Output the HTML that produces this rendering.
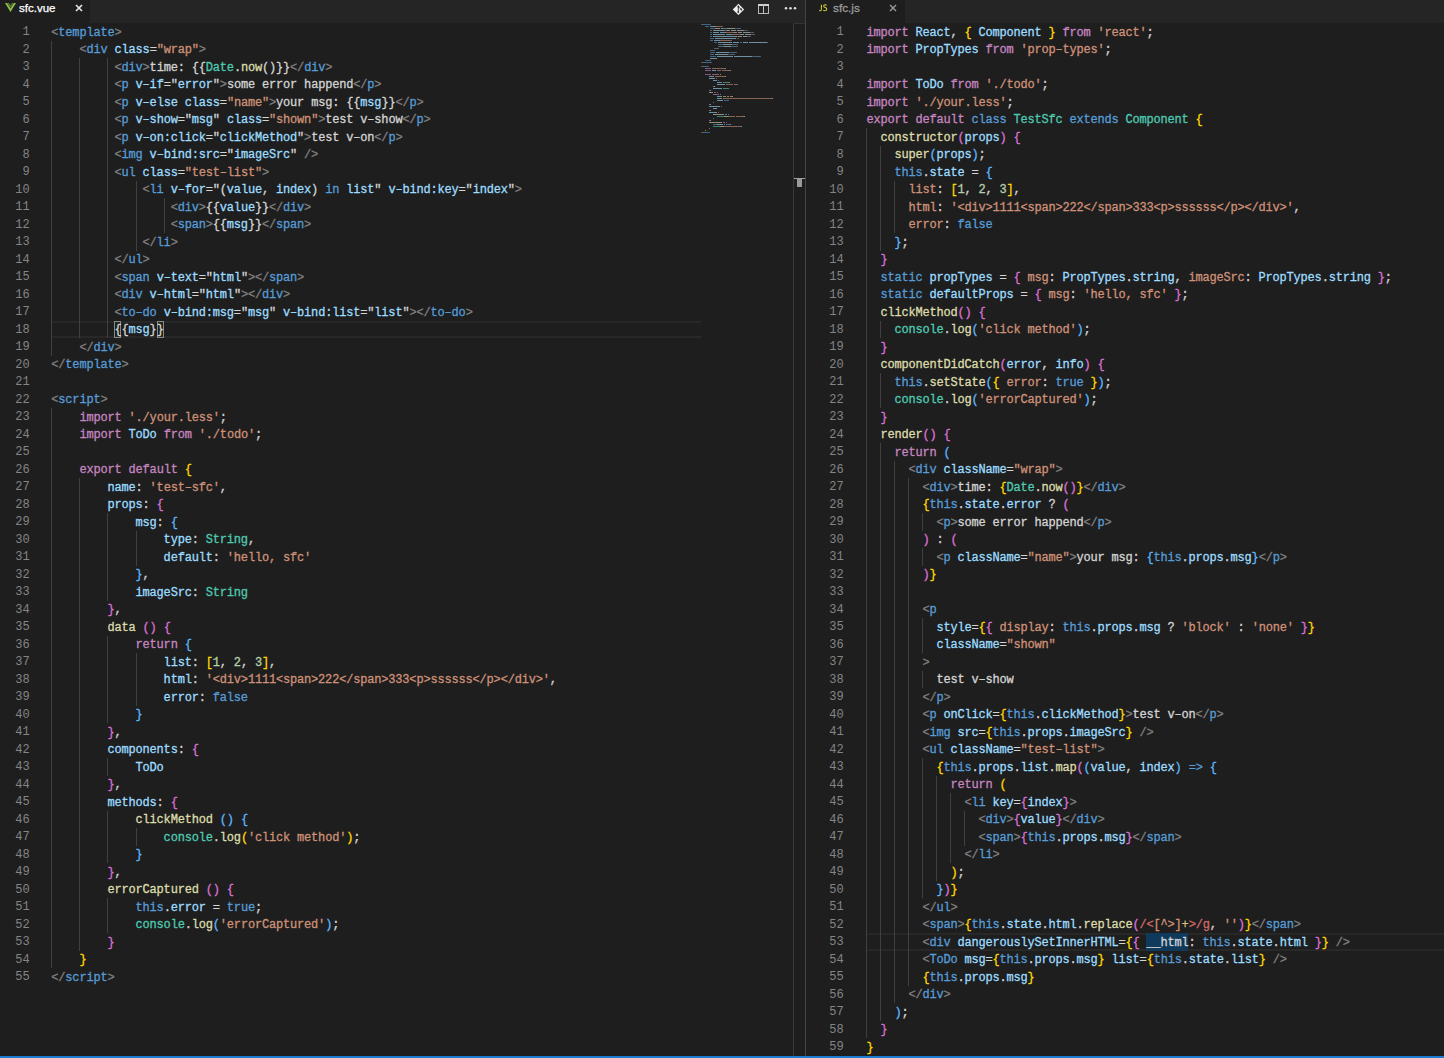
<!DOCTYPE html>
<html><head><meta charset="utf-8"><style>
*{margin:0;padding:0;box-sizing:border-box}
html,body{width:1444px;height:1058px;overflow:hidden;background:#1e1e1e}
body{position:relative;font-family:"Liberation Mono",monospace}
.pane{position:absolute;top:0;bottom:0;overflow:hidden}
#LP{left:0;width:805px}
#RP{left:806px;width:638px}
.tabs{position:absolute;left:0;right:0;top:0;height:23px;background:#252526}
.tab{position:absolute;top:0;height:23px;background:#1e1e1e;font-family:"Liberation Sans",sans-serif;font-size:11.5px;line-height:23px}
.cd,.ln{position:absolute;white-space:pre;padding-top:1.6px;-webkit-text-stroke:0.3px currentColor;font-size:12.0px;line-height:17.5px;height:17.5px;letter-spacing:-0.180px;color:#d4d4d4}
.ln{color:#858585;text-align:right;letter-spacing:0;-webkit-text-stroke:0;padding-top:1.3px}
i{font-style:normal}
.w{color:#d4d4d4}.t{color:#808080}.k{color:#569cd6}.a{color:#9cdcfe}.s{color:#ce9178}.p{color:#c586c0}.c{color:#4ec9b0}.f{color:#dcdcaa}.n{color:#b5cea8}.g{color:#ffd700}.o{color:#da70d6}.u{color:#5cb6fd}.r{color:#d16969}.y{color:#d7ba7d}
.ig{position:absolute;width:1px;background:#404040}
.cl{position:absolute;right:0;height:17.5px;border-top:2px solid #282828;border-bottom:2px solid #282828}
.Lcl{left:51px;width:650px;right:auto}.Rcl{left:60px}
.bmx{position:absolute;height:17.5px;background:rgba(0,100,0,0.1);border:1px solid #888}
.whx{position:absolute;height:17.5px;background:#0f3a5c}
.mm{position:absolute;opacity:0.6;shape-rendering:crispEdges}
.sep{position:absolute;left:805px;top:0;width:1px;height:1058px;background:#444}
.status{position:absolute;left:0;top:1056px;width:1444px;height:2px;background:#1a7dd2}
</style></head><body>
<div class="pane" id="LP">
<div class="tabs">
 <div class="tab" style="left:0;width:90px;color:#fff">
  <svg style="position:absolute;left:5px;top:3px" width="11" height="9" viewBox="0 0 11 9"><path d="M0 0 L5.5 9 L11 0 L8.8 0 L5.5 5.5 L2.2 0 Z" fill="#8dc149"/><path d="M2.6 0 L5.5 4.8 L8.4 0 L7 0 L5.5 2.5 L4 0Z" fill="#8dc149" opacity="0.6"/></svg>
  <span style="position:absolute;left:19px;top:-3px;-webkit-text-stroke:0.25px #fff">sfc.vue</span>
  <svg style="position:absolute;left:75px;top:4px" width="8" height="8" viewBox="0 0 8 8"><path d="M1 1L7 7M7 1L1 7" stroke="#e8e8e8" stroke-width="1.6"/></svg>
 </div>
 <svg style="position:absolute;left:732px;top:3px" width="13" height="13" viewBox="0 0 13 13"><path d="M6.45 0.7 L12.15 6.4 L6.45 12.1 L0.75 6.4Z" fill="#f0f0f0"/><path d="M6.3 3.4 V9.2 M6.3 3.6 L9.2 6.4" stroke="#252526" stroke-width="0.9" fill="none"/><circle cx="6.3" cy="3.5" r="0.9" fill="#252526"/><circle cx="6.3" cy="9.1" r="0.9" fill="#252526"/><circle cx="9.3" cy="6.5" r="0.9" fill="#252526"/></svg>
 <svg style="position:absolute;left:758px;top:4px" width="11" height="10" viewBox="0 0 11 10" shape-rendering="crispEdges"><rect x="0.5" y="0.5" width="10" height="9" fill="none" stroke="#b8b8b8" stroke-width="1"/><rect x="0" y="0" width="11" height="2" fill="#d0d0d0"/><rect x="5" y="0" width="1" height="10" fill="#c0c0c0"/></svg>
 <svg style="position:absolute;left:784px;top:6px" width="13" height="5" viewBox="0 0 13 5"><circle cx="2" cy="2.2" r="1.25" fill="#e0e0e0"/><circle cx="6.5" cy="2.2" r="1.25" fill="#e0e0e0"/><circle cx="11" cy="2.2" r="1.25" fill="#e0e0e0"/></svg>
</div>
<div class="cl Lcl" style="top:320.50px"></div>
<div class="ig" style="left:51px;top:40.50px;height:315.00px"></div>
<div class="ig" style="left:51px;top:408.00px;height:560.00px"></div>
<div class="ig" style="left:79px;top:58.00px;height:280.00px"></div>
<div class="ig" style="left:79px;top:478.00px;height:472.50px"></div>
<div class="ig" style="left:107px;top:58.00px;height:280.00px"></div>
<div class="ig" style="left:107px;top:513.00px;height:87.50px"></div>
<div class="ig" style="left:107px;top:635.50px;height:87.50px"></div>
<div class="ig" style="left:107px;top:758.00px;height:17.50px"></div>
<div class="ig" style="left:107px;top:810.50px;height:52.50px"></div>
<div class="ig" style="left:107px;top:898.00px;height:35.00px"></div>
<div class="ig" style="left:136px;top:180.50px;height:70.00px"></div>
<div class="ig" style="left:136px;top:530.50px;height:35.00px"></div>
<div class="ig" style="left:136px;top:653.00px;height:52.50px"></div>
<div class="ig" style="left:136px;top:828.00px;height:17.50px"></div>
<div class="ig" style="left:164px;top:198.00px;height:35.00px"></div>
<div class="ln" style="top:23.00px;right:775.40px">1</div>
<div class="cd" style="left:51.30px;top:23.00px;letter-spacing:-0.180px"><i class="t">&lt;</i><i class="k">template</i><i class="t">&gt;</i></div>
<div class="ln" style="top:40.50px;right:775.40px">2</div>
<div class="cd" style="left:79.38px;top:40.50px;letter-spacing:-0.180px"><i class="t">&lt;</i><i class="k">div</i> <i class="a">class</i>=<i class="s">"wrap"</i><i class="t">&gt;</i></div>
<div class="ln" style="top:58.00px;right:775.40px">3</div>
<div class="cd" style="left:114.48px;top:58.00px;letter-spacing:-0.180px"><i class="t">&lt;</i><i class="k">div</i><i class="t">&gt;</i>time: {{<i class="c">Date</i>.<i class="f">now</i>()}}<i class="t">&lt;/</i><i class="k">div</i><i class="t">&gt;</i></div>
<div class="ln" style="top:75.50px;right:775.40px">4</div>
<div class="cd" style="left:114.48px;top:75.50px;letter-spacing:-0.180px"><i class="t">&lt;</i><i class="k">p</i> <i class="a">v–if</i>="<i class="a">error</i>"<i class="t">&gt;</i>some error happend<i class="t">&lt;/</i><i class="k">p</i><i class="t">&gt;</i></div>
<div class="ln" style="top:93.00px;right:775.40px">5</div>
<div class="cd" style="left:114.48px;top:93.00px;letter-spacing:-0.180px"><i class="t">&lt;</i><i class="k">p</i> <i class="a">v–else</i> <i class="a">class</i>=<i class="s">"name"</i><i class="t">&gt;</i>your msg: {{<i class="a">msg</i>}}<i class="t">&lt;/</i><i class="k">p</i><i class="t">&gt;</i></div>
<div class="ln" style="top:110.50px;right:775.40px">6</div>
<div class="cd" style="left:114.48px;top:110.50px;letter-spacing:-0.180px"><i class="t">&lt;</i><i class="k">p</i> <i class="a">v–show</i>="<i class="a">msg</i>" <i class="a">class</i>=<i class="s">"shown"</i><i class="t">&gt;</i>test v–show<i class="t">&lt;/</i><i class="k">p</i><i class="t">&gt;</i></div>
<div class="ln" style="top:128.00px;right:775.40px">7</div>
<div class="cd" style="left:114.48px;top:128.00px;letter-spacing:-0.180px"><i class="t">&lt;</i><i class="k">p</i> <i class="a">v–on:click</i>="<i class="a">clickMethod</i>"<i class="t">&gt;</i>test v–on<i class="t">&lt;/</i><i class="k">p</i><i class="t">&gt;</i></div>
<div class="ln" style="top:145.50px;right:775.40px">8</div>
<div class="cd" style="left:114.48px;top:145.50px;letter-spacing:-0.180px"><i class="t">&lt;</i><i class="k">img</i> <i class="a">v–bind:src</i>="<i class="a">imageSrc</i>" <i class="t">/&gt;</i></div>
<div class="ln" style="top:163.00px;right:775.40px">9</div>
<div class="cd" style="left:114.48px;top:163.00px;letter-spacing:-0.180px"><i class="t">&lt;</i><i class="k">ul</i> <i class="a">class</i>=<i class="s">"test–list"</i><i class="t">&gt;</i></div>
<div class="ln" style="top:180.50px;right:775.40px">10</div>
<div class="cd" style="left:142.56px;top:180.50px;letter-spacing:-0.180px"><i class="t">&lt;</i><i class="k">li</i> <i class="a">v–for</i>="(<i class="a">value</i>, <i class="a">index</i>) <i class="k">in</i> <i class="a">list</i>" <i class="a">v–bind:key</i>="<i class="a">index</i>"<i class="t">&gt;</i></div>
<div class="ln" style="top:198.00px;right:775.40px">11</div>
<div class="cd" style="left:170.64px;top:198.00px;letter-spacing:-0.180px"><i class="t">&lt;</i><i class="k">div</i><i class="t">&gt;</i>{{<i class="a">value</i>}}<i class="t">&lt;/</i><i class="k">div</i><i class="t">&gt;</i></div>
<div class="ln" style="top:215.50px;right:775.40px">12</div>
<div class="cd" style="left:170.64px;top:215.50px;letter-spacing:-0.180px"><i class="t">&lt;</i><i class="k">span</i><i class="t">&gt;</i>{{<i class="a">msg</i>}}<i class="t">&lt;/</i><i class="k">span</i><i class="t">&gt;</i></div>
<div class="ln" style="top:233.00px;right:775.40px">13</div>
<div class="cd" style="left:142.56px;top:233.00px;letter-spacing:-0.180px"><i class="t">&lt;/</i><i class="k">li</i><i class="t">&gt;</i></div>
<div class="ln" style="top:250.50px;right:775.40px">14</div>
<div class="cd" style="left:114.48px;top:250.50px;letter-spacing:-0.180px"><i class="t">&lt;/</i><i class="k">ul</i><i class="t">&gt;</i></div>
<div class="ln" style="top:268.00px;right:775.40px">15</div>
<div class="cd" style="left:114.48px;top:268.00px;letter-spacing:-0.180px"><i class="t">&lt;</i><i class="k">span</i> <i class="a">v–text</i>="<i class="a">html</i>"<i class="t">&gt;&lt;/</i><i class="k">span</i><i class="t">&gt;</i></div>
<div class="ln" style="top:285.50px;right:775.40px">16</div>
<div class="cd" style="left:114.48px;top:285.50px;letter-spacing:-0.180px"><i class="t">&lt;</i><i class="k">div</i> <i class="a">v–html</i>="<i class="a">html</i>"<i class="t">&gt;&lt;/</i><i class="k">div</i><i class="t">&gt;</i></div>
<div class="ln" style="top:303.00px;right:775.40px">17</div>
<div class="cd" style="left:114.48px;top:303.00px;letter-spacing:-0.180px"><i class="t">&lt;</i><i class="k">to–do</i> <i class="a">v–bind:msg</i>="<i class="a">msg</i>" <i class="a">v–bind:list</i>="<i class="a">list</i>"<i class="t">&gt;&lt;/</i><i class="k">to–do</i><i class="t">&gt;</i></div>
<div class="ln" style="top:320.50px;right:775.40px">18</div>
<div class="bmx" style="left:114.48px;top:320.50px;width:7.02px"></div>
<div class="bmx" style="left:156.60px;top:320.50px;width:7.02px"></div>
<div class="cd" style="left:114.48px;top:320.50px;letter-spacing:-0.180px"><i class="bm">{</i>{<i class="a">msg</i>}<i class="bm">}</i></div>
<div class="ln" style="top:338.00px;right:775.40px">19</div>
<div class="cd" style="left:79.38px;top:338.00px;letter-spacing:-0.180px"><i class="t">&lt;/</i><i class="k">div</i><i class="t">&gt;</i></div>
<div class="ln" style="top:355.50px;right:775.40px">20</div>
<div class="cd" style="left:51.30px;top:355.50px;letter-spacing:-0.180px"><i class="t">&lt;/</i><i class="k">template</i><i class="t">&gt;</i></div>
<div class="ln" style="top:373.00px;right:775.40px">21</div>
<div class="ln" style="top:390.50px;right:775.40px">22</div>
<div class="cd" style="left:51.30px;top:390.50px;letter-spacing:-0.180px"><i class="t">&lt;</i><i class="k">script</i><i class="t">&gt;</i></div>
<div class="ln" style="top:408.00px;right:775.40px">23</div>
<div class="cd" style="left:79.38px;top:408.00px;letter-spacing:-0.180px"><i class="p">import</i> <i class="s">'./your.less'</i>;</div>
<div class="ln" style="top:425.50px;right:775.40px">24</div>
<div class="cd" style="left:79.38px;top:425.50px;letter-spacing:-0.180px"><i class="p">import</i> <i class="a">ToDo</i> <i class="p">from</i> <i class="s">'./todo'</i>;</div>
<div class="ln" style="top:443.00px;right:775.40px">25</div>
<div class="ln" style="top:460.50px;right:775.40px">26</div>
<div class="cd" style="left:79.38px;top:460.50px;letter-spacing:-0.180px"><i class="p">export</i> <i class="p">default</i> <i class="g">{</i></div>
<div class="ln" style="top:478.00px;right:775.40px">27</div>
<div class="cd" style="left:107.46px;top:478.00px;letter-spacing:-0.180px"><i class="a">name</i>: <i class="s">'test–sfc'</i>,</div>
<div class="ln" style="top:495.50px;right:775.40px">28</div>
<div class="cd" style="left:107.46px;top:495.50px;letter-spacing:-0.180px"><i class="a">props</i>: <i class="o">{</i></div>
<div class="ln" style="top:513.00px;right:775.40px">29</div>
<div class="cd" style="left:135.54px;top:513.00px;letter-spacing:-0.180px"><i class="a">msg</i>: <i class="u">{</i></div>
<div class="ln" style="top:530.50px;right:775.40px">30</div>
<div class="cd" style="left:163.62px;top:530.50px;letter-spacing:-0.180px"><i class="a">type</i>: <i class="c">String</i>,</div>
<div class="ln" style="top:548.00px;right:775.40px">31</div>
<div class="cd" style="left:163.62px;top:548.00px;letter-spacing:-0.180px"><i class="a">default</i>: <i class="s">'hello, sfc'</i></div>
<div class="ln" style="top:565.50px;right:775.40px">32</div>
<div class="cd" style="left:135.54px;top:565.50px;letter-spacing:-0.180px"><i class="u">}</i>,</div>
<div class="ln" style="top:583.00px;right:775.40px">33</div>
<div class="cd" style="left:135.54px;top:583.00px;letter-spacing:-0.180px"><i class="a">imageSrc</i>: <i class="c">String</i></div>
<div class="ln" style="top:600.50px;right:775.40px">34</div>
<div class="cd" style="left:107.46px;top:600.50px;letter-spacing:-0.180px"><i class="o">}</i>,</div>
<div class="ln" style="top:618.00px;right:775.40px">35</div>
<div class="cd" style="left:107.46px;top:618.00px;letter-spacing:-0.180px"><i class="f">data</i> <i class="o">()</i> <i class="o">{</i></div>
<div class="ln" style="top:635.50px;right:775.40px">36</div>
<div class="cd" style="left:135.54px;top:635.50px;letter-spacing:-0.180px"><i class="p">return</i> <i class="u">{</i></div>
<div class="ln" style="top:653.00px;right:775.40px">37</div>
<div class="cd" style="left:163.62px;top:653.00px;letter-spacing:-0.180px"><i class="a">list</i>: <i class="g">[</i><i class="n">1</i>, <i class="n">2</i>, <i class="n">3</i><i class="g">]</i>,</div>
<div class="ln" style="top:670.50px;right:775.40px">38</div>
<div class="cd" style="left:163.62px;top:670.50px;letter-spacing:-0.180px"><i class="a">html</i>: <i class="s">'&lt;div&gt;1111&lt;span&gt;222&lt;/span&gt;333&lt;p&gt;ssssss&lt;/p&gt;&lt;/div&gt;'</i>,</div>
<div class="ln" style="top:688.00px;right:775.40px">39</div>
<div class="cd" style="left:163.62px;top:688.00px;letter-spacing:-0.180px"><i class="a">error</i>: <i class="k">false</i></div>
<div class="ln" style="top:705.50px;right:775.40px">40</div>
<div class="cd" style="left:135.54px;top:705.50px;letter-spacing:-0.180px"><i class="u">}</i></div>
<div class="ln" style="top:723.00px;right:775.40px">41</div>
<div class="cd" style="left:107.46px;top:723.00px;letter-spacing:-0.180px"><i class="o">}</i>,</div>
<div class="ln" style="top:740.50px;right:775.40px">42</div>
<div class="cd" style="left:107.46px;top:740.50px;letter-spacing:-0.180px"><i class="a">components</i>: <i class="o">{</i></div>
<div class="ln" style="top:758.00px;right:775.40px">43</div>
<div class="cd" style="left:135.54px;top:758.00px;letter-spacing:-0.180px"><i class="a">ToDo</i></div>
<div class="ln" style="top:775.50px;right:775.40px">44</div>
<div class="cd" style="left:107.46px;top:775.50px;letter-spacing:-0.180px"><i class="o">}</i>,</div>
<div class="ln" style="top:793.00px;right:775.40px">45</div>
<div class="cd" style="left:107.46px;top:793.00px;letter-spacing:-0.180px"><i class="a">methods</i>: <i class="o">{</i></div>
<div class="ln" style="top:810.50px;right:775.40px">46</div>
<div class="cd" style="left:135.54px;top:810.50px;letter-spacing:-0.180px"><i class="f">clickMethod</i> <i class="u">()</i> <i class="u">{</i></div>
<div class="ln" style="top:828.00px;right:775.40px">47</div>
<div class="cd" style="left:163.62px;top:828.00px;letter-spacing:-0.180px"><i class="c">console</i>.<i class="f">log</i><i class="g">(</i><i class="s">'click method'</i><i class="g">)</i>;</div>
<div class="ln" style="top:845.50px;right:775.40px">48</div>
<div class="cd" style="left:135.54px;top:845.50px;letter-spacing:-0.180px"><i class="u">}</i></div>
<div class="ln" style="top:863.00px;right:775.40px">49</div>
<div class="cd" style="left:107.46px;top:863.00px;letter-spacing:-0.180px"><i class="o">}</i>,</div>
<div class="ln" style="top:880.50px;right:775.40px">50</div>
<div class="cd" style="left:107.46px;top:880.50px;letter-spacing:-0.180px"><i class="f">errorCaptured</i> <i class="o">()</i> <i class="o">{</i></div>
<div class="ln" style="top:898.00px;right:775.40px">51</div>
<div class="cd" style="left:135.54px;top:898.00px;letter-spacing:-0.180px"><i class="k">this</i>.<i class="a">error</i> = <i class="k">true</i>;</div>
<div class="ln" style="top:915.50px;right:775.40px">52</div>
<div class="cd" style="left:135.54px;top:915.50px;letter-spacing:-0.180px"><i class="c">console</i>.<i class="f">log</i><i class="u">(</i><i class="s">'errorCaptured'</i><i class="u">)</i>;</div>
<div class="ln" style="top:933.00px;right:775.40px">53</div>
<div class="cd" style="left:107.46px;top:933.00px;letter-spacing:-0.180px"><i class="o">}</i></div>
<div class="ln" style="top:950.50px;right:775.40px">54</div>
<div class="cd" style="left:79.38px;top:950.50px;letter-spacing:-0.180px"><i class="g">}</i></div>
<div class="ln" style="top:968.00px;right:775.40px">55</div>
<div class="cd" style="left:51.30px;top:968.00px;letter-spacing:-0.180px"><i class="t">&lt;/</i><i class="k">script</i><i class="t">&gt;</i></div>
<svg class="mm" style="left:701px;top:23px" width="92" height="120" viewBox="0 0 92 120"><rect x="0" y="1" width="1" height="1" fill="#808080"/><rect x="1" y="1" width="8" height="1" fill="#569cd6"/><rect x="9" y="1" width="1" height="1" fill="#808080"/><rect x="4" y="3" width="1" height="1" fill="#808080"/><rect x="5" y="3" width="3" height="1" fill="#569cd6"/><rect x="9" y="3" width="5" height="1" fill="#9cdcfe"/><rect x="14" y="3" width="1" height="1" fill="#d4d4d4"/><rect x="15" y="3" width="6" height="1" fill="#ce9178"/><rect x="21" y="3" width="1" height="1" fill="#808080"/><rect x="9" y="5" width="1" height="1" fill="#808080"/><rect x="10" y="5" width="3" height="1" fill="#569cd6"/><rect x="13" y="5" width="1" height="1" fill="#808080"/><rect x="14" y="5" width="5" height="1" fill="#d4d4d4"/><rect x="20" y="5" width="2" height="1" fill="#d4d4d4"/><rect x="22" y="5" width="4" height="1" fill="#4ec9b0"/><rect x="26" y="5" width="1" height="1" fill="#d4d4d4"/><rect x="27" y="5" width="3" height="1" fill="#dcdcaa"/><rect x="30" y="5" width="4" height="1" fill="#d4d4d4"/><rect x="34" y="5" width="2" height="1" fill="#808080"/><rect x="36" y="5" width="3" height="1" fill="#569cd6"/><rect x="39" y="5" width="1" height="1" fill="#808080"/><rect x="9" y="7" width="1" height="1" fill="#808080"/><rect x="10" y="7" width="1" height="1" fill="#569cd6"/><rect x="12" y="7" width="4" height="1" fill="#9cdcfe"/><rect x="16" y="7" width="2" height="1" fill="#d4d4d4"/><rect x="18" y="7" width="5" height="1" fill="#9cdcfe"/><rect x="23" y="7" width="1" height="1" fill="#d4d4d4"/><rect x="24" y="7" width="1" height="1" fill="#808080"/><rect x="25" y="7" width="4" height="1" fill="#d4d4d4"/><rect x="30" y="7" width="5" height="1" fill="#d4d4d4"/><rect x="36" y="7" width="7" height="1" fill="#d4d4d4"/><rect x="43" y="7" width="2" height="1" fill="#808080"/><rect x="45" y="7" width="1" height="1" fill="#569cd6"/><rect x="46" y="7" width="1" height="1" fill="#808080"/><rect x="9" y="9" width="1" height="1" fill="#808080"/><rect x="10" y="9" width="1" height="1" fill="#569cd6"/><rect x="12" y="9" width="6" height="1" fill="#9cdcfe"/><rect x="19" y="9" width="5" height="1" fill="#9cdcfe"/><rect x="24" y="9" width="1" height="1" fill="#d4d4d4"/><rect x="25" y="9" width="6" height="1" fill="#ce9178"/><rect x="31" y="9" width="1" height="1" fill="#808080"/><rect x="32" y="9" width="4" height="1" fill="#d4d4d4"/><rect x="37" y="9" width="4" height="1" fill="#d4d4d4"/><rect x="42" y="9" width="2" height="1" fill="#d4d4d4"/><rect x="44" y="9" width="3" height="1" fill="#9cdcfe"/><rect x="47" y="9" width="2" height="1" fill="#d4d4d4"/><rect x="49" y="9" width="2" height="1" fill="#808080"/><rect x="51" y="9" width="1" height="1" fill="#569cd6"/><rect x="52" y="9" width="1" height="1" fill="#808080"/><rect x="9" y="11" width="1" height="1" fill="#808080"/><rect x="10" y="11" width="1" height="1" fill="#569cd6"/><rect x="12" y="11" width="6" height="1" fill="#9cdcfe"/><rect x="18" y="11" width="2" height="1" fill="#d4d4d4"/><rect x="20" y="11" width="3" height="1" fill="#9cdcfe"/><rect x="23" y="11" width="1" height="1" fill="#d4d4d4"/><rect x="25" y="11" width="5" height="1" fill="#9cdcfe"/><rect x="30" y="11" width="1" height="1" fill="#d4d4d4"/><rect x="31" y="11" width="7" height="1" fill="#ce9178"/><rect x="38" y="11" width="1" height="1" fill="#808080"/><rect x="39" y="11" width="4" height="1" fill="#d4d4d4"/><rect x="44" y="11" width="6" height="1" fill="#d4d4d4"/><rect x="50" y="11" width="2" height="1" fill="#808080"/><rect x="52" y="11" width="1" height="1" fill="#569cd6"/><rect x="53" y="11" width="1" height="1" fill="#808080"/><rect x="9" y="13" width="1" height="1" fill="#808080"/><rect x="10" y="13" width="1" height="1" fill="#569cd6"/><rect x="12" y="13" width="10" height="1" fill="#9cdcfe"/><rect x="22" y="13" width="2" height="1" fill="#d4d4d4"/><rect x="24" y="13" width="11" height="1" fill="#9cdcfe"/><rect x="35" y="13" width="1" height="1" fill="#d4d4d4"/><rect x="36" y="13" width="1" height="1" fill="#808080"/><rect x="37" y="13" width="4" height="1" fill="#d4d4d4"/><rect x="42" y="13" width="4" height="1" fill="#d4d4d4"/><rect x="46" y="13" width="2" height="1" fill="#808080"/><rect x="48" y="13" width="1" height="1" fill="#569cd6"/><rect x="49" y="13" width="1" height="1" fill="#808080"/><rect x="9" y="15" width="1" height="1" fill="#808080"/><rect x="10" y="15" width="3" height="1" fill="#569cd6"/><rect x="14" y="15" width="10" height="1" fill="#9cdcfe"/><rect x="24" y="15" width="2" height="1" fill="#d4d4d4"/><rect x="26" y="15" width="8" height="1" fill="#9cdcfe"/><rect x="34" y="15" width="1" height="1" fill="#d4d4d4"/><rect x="36" y="15" width="2" height="1" fill="#808080"/><rect x="9" y="17" width="1" height="1" fill="#808080"/><rect x="10" y="17" width="2" height="1" fill="#569cd6"/><rect x="13" y="17" width="5" height="1" fill="#9cdcfe"/><rect x="18" y="17" width="1" height="1" fill="#d4d4d4"/><rect x="19" y="17" width="11" height="1" fill="#ce9178"/><rect x="30" y="17" width="1" height="1" fill="#808080"/><rect x="13" y="19" width="1" height="1" fill="#808080"/><rect x="14" y="19" width="2" height="1" fill="#569cd6"/><rect x="17" y="19" width="5" height="1" fill="#9cdcfe"/><rect x="22" y="19" width="3" height="1" fill="#d4d4d4"/><rect x="25" y="19" width="5" height="1" fill="#9cdcfe"/><rect x="30" y="19" width="1" height="1" fill="#d4d4d4"/><rect x="32" y="19" width="5" height="1" fill="#9cdcfe"/><rect x="37" y="19" width="1" height="1" fill="#d4d4d4"/><rect x="39" y="19" width="2" height="1" fill="#569cd6"/><rect x="42" y="19" width="4" height="1" fill="#9cdcfe"/><rect x="46" y="19" width="1" height="1" fill="#d4d4d4"/><rect x="48" y="19" width="10" height="1" fill="#9cdcfe"/><rect x="58" y="19" width="2" height="1" fill="#d4d4d4"/><rect x="60" y="19" width="5" height="1" fill="#9cdcfe"/><rect x="65" y="19" width="1" height="1" fill="#d4d4d4"/><rect x="66" y="19" width="1" height="1" fill="#808080"/><rect x="17" y="21" width="1" height="1" fill="#808080"/><rect x="18" y="21" width="3" height="1" fill="#569cd6"/><rect x="21" y="21" width="1" height="1" fill="#808080"/><rect x="22" y="21" width="2" height="1" fill="#d4d4d4"/><rect x="24" y="21" width="5" height="1" fill="#9cdcfe"/><rect x="29" y="21" width="2" height="1" fill="#d4d4d4"/><rect x="31" y="21" width="2" height="1" fill="#808080"/><rect x="33" y="21" width="3" height="1" fill="#569cd6"/><rect x="36" y="21" width="1" height="1" fill="#808080"/><rect x="17" y="23" width="1" height="1" fill="#808080"/><rect x="18" y="23" width="4" height="1" fill="#569cd6"/><rect x="22" y="23" width="1" height="1" fill="#808080"/><rect x="23" y="23" width="2" height="1" fill="#d4d4d4"/><rect x="25" y="23" width="3" height="1" fill="#9cdcfe"/><rect x="28" y="23" width="2" height="1" fill="#d4d4d4"/><rect x="30" y="23" width="2" height="1" fill="#808080"/><rect x="32" y="23" width="4" height="1" fill="#569cd6"/><rect x="36" y="23" width="1" height="1" fill="#808080"/><rect x="13" y="25" width="2" height="1" fill="#808080"/><rect x="15" y="25" width="2" height="1" fill="#569cd6"/><rect x="17" y="25" width="1" height="1" fill="#808080"/><rect x="9" y="27" width="2" height="1" fill="#808080"/><rect x="11" y="27" width="2" height="1" fill="#569cd6"/><rect x="13" y="27" width="1" height="1" fill="#808080"/><rect x="9" y="29" width="1" height="1" fill="#808080"/><rect x="10" y="29" width="4" height="1" fill="#569cd6"/><rect x="15" y="29" width="6" height="1" fill="#9cdcfe"/><rect x="21" y="29" width="2" height="1" fill="#d4d4d4"/><rect x="23" y="29" width="4" height="1" fill="#9cdcfe"/><rect x="27" y="29" width="1" height="1" fill="#d4d4d4"/><rect x="28" y="29" width="3" height="1" fill="#808080"/><rect x="31" y="29" width="4" height="1" fill="#569cd6"/><rect x="35" y="29" width="1" height="1" fill="#808080"/><rect x="9" y="31" width="1" height="1" fill="#808080"/><rect x="10" y="31" width="3" height="1" fill="#569cd6"/><rect x="14" y="31" width="6" height="1" fill="#9cdcfe"/><rect x="20" y="31" width="2" height="1" fill="#d4d4d4"/><rect x="22" y="31" width="4" height="1" fill="#9cdcfe"/><rect x="26" y="31" width="1" height="1" fill="#d4d4d4"/><rect x="27" y="31" width="3" height="1" fill="#808080"/><rect x="30" y="31" width="3" height="1" fill="#569cd6"/><rect x="33" y="31" width="1" height="1" fill="#808080"/><rect x="9" y="33" width="1" height="1" fill="#808080"/><rect x="10" y="33" width="5" height="1" fill="#569cd6"/><rect x="16" y="33" width="10" height="1" fill="#9cdcfe"/><rect x="26" y="33" width="2" height="1" fill="#d4d4d4"/><rect x="28" y="33" width="3" height="1" fill="#9cdcfe"/><rect x="31" y="33" width="1" height="1" fill="#d4d4d4"/><rect x="33" y="33" width="11" height="1" fill="#9cdcfe"/><rect x="44" y="33" width="2" height="1" fill="#d4d4d4"/><rect x="46" y="33" width="4" height="1" fill="#9cdcfe"/><rect x="50" y="33" width="1" height="1" fill="#d4d4d4"/><rect x="51" y="33" width="3" height="1" fill="#808080"/><rect x="54" y="33" width="5" height="1" fill="#569cd6"/><rect x="59" y="33" width="1" height="1" fill="#808080"/><rect x="9" y="35" width="1" height="1" fill="#d4d4d4"/><rect x="10" y="35" width="1" height="1" fill="#d4d4d4"/><rect x="11" y="35" width="3" height="1" fill="#9cdcfe"/><rect x="14" y="35" width="1" height="1" fill="#d4d4d4"/><rect x="15" y="35" width="1" height="1" fill="#d4d4d4"/><rect x="4" y="37" width="2" height="1" fill="#808080"/><rect x="6" y="37" width="3" height="1" fill="#569cd6"/><rect x="9" y="37" width="1" height="1" fill="#808080"/><rect x="0" y="39" width="2" height="1" fill="#808080"/><rect x="2" y="39" width="8" height="1" fill="#569cd6"/><rect x="10" y="39" width="1" height="1" fill="#808080"/><rect x="0" y="43" width="1" height="1" fill="#808080"/><rect x="1" y="43" width="6" height="1" fill="#569cd6"/><rect x="7" y="43" width="1" height="1" fill="#808080"/><rect x="4" y="45" width="6" height="1" fill="#c586c0"/><rect x="11" y="45" width="13" height="1" fill="#ce9178"/><rect x="24" y="45" width="1" height="1" fill="#d4d4d4"/><rect x="4" y="47" width="6" height="1" fill="#c586c0"/><rect x="11" y="47" width="4" height="1" fill="#9cdcfe"/><rect x="16" y="47" width="4" height="1" fill="#c586c0"/><rect x="21" y="47" width="8" height="1" fill="#ce9178"/><rect x="29" y="47" width="1" height="1" fill="#d4d4d4"/><rect x="4" y="51" width="6" height="1" fill="#c586c0"/><rect x="11" y="51" width="7" height="1" fill="#c586c0"/><rect x="19" y="51" width="1" height="1" fill="#ffd700"/><rect x="8" y="53" width="4" height="1" fill="#9cdcfe"/><rect x="12" y="53" width="1" height="1" fill="#d4d4d4"/><rect x="14" y="53" width="10" height="1" fill="#ce9178"/><rect x="24" y="53" width="1" height="1" fill="#d4d4d4"/><rect x="8" y="55" width="5" height="1" fill="#9cdcfe"/><rect x="13" y="55" width="1" height="1" fill="#d4d4d4"/><rect x="15" y="55" width="1" height="1" fill="#da70d6"/><rect x="12" y="57" width="3" height="1" fill="#9cdcfe"/><rect x="15" y="57" width="1" height="1" fill="#d4d4d4"/><rect x="17" y="57" width="1" height="1" fill="#5cb6fd"/><rect x="16" y="59" width="4" height="1" fill="#9cdcfe"/><rect x="20" y="59" width="1" height="1" fill="#d4d4d4"/><rect x="22" y="59" width="6" height="1" fill="#4ec9b0"/><rect x="28" y="59" width="1" height="1" fill="#d4d4d4"/><rect x="16" y="61" width="7" height="1" fill="#9cdcfe"/><rect x="23" y="61" width="1" height="1" fill="#d4d4d4"/><rect x="25" y="61" width="7" height="1" fill="#ce9178"/><rect x="33" y="61" width="4" height="1" fill="#ce9178"/><rect x="12" y="63" width="1" height="1" fill="#5cb6fd"/><rect x="13" y="63" width="1" height="1" fill="#d4d4d4"/><rect x="12" y="65" width="8" height="1" fill="#9cdcfe"/><rect x="20" y="65" width="1" height="1" fill="#d4d4d4"/><rect x="22" y="65" width="6" height="1" fill="#4ec9b0"/><rect x="8" y="67" width="1" height="1" fill="#da70d6"/><rect x="9" y="67" width="1" height="1" fill="#d4d4d4"/><rect x="8" y="69" width="4" height="1" fill="#dcdcaa"/><rect x="13" y="69" width="2" height="1" fill="#da70d6"/><rect x="16" y="69" width="1" height="1" fill="#da70d6"/><rect x="12" y="71" width="6" height="1" fill="#c586c0"/><rect x="19" y="71" width="1" height="1" fill="#5cb6fd"/><rect x="16" y="73" width="4" height="1" fill="#9cdcfe"/><rect x="20" y="73" width="1" height="1" fill="#d4d4d4"/><rect x="22" y="73" width="1" height="1" fill="#ffd700"/><rect x="23" y="73" width="1" height="1" fill="#b5cea8"/><rect x="24" y="73" width="1" height="1" fill="#d4d4d4"/><rect x="26" y="73" width="1" height="1" fill="#b5cea8"/><rect x="27" y="73" width="1" height="1" fill="#d4d4d4"/><rect x="29" y="73" width="1" height="1" fill="#b5cea8"/><rect x="30" y="73" width="1" height="1" fill="#ffd700"/><rect x="31" y="73" width="1" height="1" fill="#d4d4d4"/><rect x="16" y="75" width="4" height="1" fill="#9cdcfe"/><rect x="20" y="75" width="1" height="1" fill="#d4d4d4"/><rect x="22" y="75" width="49" height="1" fill="#ce9178"/><rect x="71" y="75" width="1" height="1" fill="#d4d4d4"/><rect x="16" y="77" width="5" height="1" fill="#9cdcfe"/><rect x="21" y="77" width="1" height="1" fill="#d4d4d4"/><rect x="23" y="77" width="5" height="1" fill="#569cd6"/><rect x="12" y="79" width="1" height="1" fill="#5cb6fd"/><rect x="8" y="81" width="1" height="1" fill="#da70d6"/><rect x="9" y="81" width="1" height="1" fill="#d4d4d4"/><rect x="8" y="83" width="10" height="1" fill="#9cdcfe"/><rect x="18" y="83" width="1" height="1" fill="#d4d4d4"/><rect x="20" y="83" width="1" height="1" fill="#da70d6"/><rect x="12" y="85" width="4" height="1" fill="#9cdcfe"/><rect x="8" y="87" width="1" height="1" fill="#da70d6"/><rect x="9" y="87" width="1" height="1" fill="#d4d4d4"/><rect x="8" y="89" width="7" height="1" fill="#9cdcfe"/><rect x="15" y="89" width="1" height="1" fill="#d4d4d4"/><rect x="17" y="89" width="1" height="1" fill="#da70d6"/><rect x="12" y="91" width="11" height="1" fill="#dcdcaa"/><rect x="24" y="91" width="2" height="1" fill="#5cb6fd"/><rect x="27" y="91" width="1" height="1" fill="#5cb6fd"/><rect x="16" y="93" width="7" height="1" fill="#4ec9b0"/><rect x="23" y="93" width="1" height="1" fill="#d4d4d4"/><rect x="24" y="93" width="3" height="1" fill="#dcdcaa"/><rect x="27" y="93" width="1" height="1" fill="#ffd700"/><rect x="28" y="93" width="6" height="1" fill="#ce9178"/><rect x="35" y="93" width="7" height="1" fill="#ce9178"/><rect x="42" y="93" width="1" height="1" fill="#ffd700"/><rect x="43" y="93" width="1" height="1" fill="#d4d4d4"/><rect x="12" y="95" width="1" height="1" fill="#5cb6fd"/><rect x="8" y="97" width="1" height="1" fill="#da70d6"/><rect x="9" y="97" width="1" height="1" fill="#d4d4d4"/><rect x="8" y="99" width="13" height="1" fill="#dcdcaa"/><rect x="22" y="99" width="2" height="1" fill="#da70d6"/><rect x="25" y="99" width="1" height="1" fill="#da70d6"/><rect x="12" y="101" width="4" height="1" fill="#569cd6"/><rect x="16" y="101" width="1" height="1" fill="#d4d4d4"/><rect x="17" y="101" width="5" height="1" fill="#9cdcfe"/><rect x="23" y="101" width="1" height="1" fill="#d4d4d4"/><rect x="25" y="101" width="4" height="1" fill="#569cd6"/><rect x="29" y="101" width="1" height="1" fill="#d4d4d4"/><rect x="12" y="103" width="7" height="1" fill="#4ec9b0"/><rect x="19" y="103" width="1" height="1" fill="#d4d4d4"/><rect x="20" y="103" width="3" height="1" fill="#dcdcaa"/><rect x="23" y="103" width="1" height="1" fill="#5cb6fd"/><rect x="24" y="103" width="15" height="1" fill="#ce9178"/><rect x="39" y="103" width="1" height="1" fill="#5cb6fd"/><rect x="40" y="103" width="1" height="1" fill="#d4d4d4"/><rect x="8" y="105" width="1" height="1" fill="#da70d6"/><rect x="4" y="107" width="1" height="1" fill="#ffd700"/><rect x="0" y="109" width="2" height="1" fill="#808080"/><rect x="2" y="109" width="6" height="1" fill="#569cd6"/><rect x="8" y="109" width="1" height="1" fill="#808080"/></svg>
<div style="position:absolute;left:793px;top:23px;width:1px;height:1035px;background:#3a3a3a"></div><div style="position:absolute;left:793px;top:23px;width:12px;height:1px;background:#333"></div>
<div style="position:absolute;left:794px;top:178px;width:11px;height:1px;background:#a0a0a0"></div>
<div style="position:absolute;left:797px;top:179px;width:5px;height:8px;background:#9a9a9a"></div>
</div>
<div class="sep"></div>
<div class="pane" id="RP">
<div class="tabs">
 <div class="tab" style="left:0;width:99px;color:#9a9a9a">
  <svg style="position:absolute;left:12px;top:4px" width="10" height="8" viewBox="0 0 10 8"><path d="M3.4 0.8 V5.3 Q3.4 6.7 2.1 6.7 H1.1" stroke="#cbcb41" stroke-width="1.1" fill="none"/><path d="M8.7 1.3 Q8.2 0.8 7.1 0.8 Q5.7 0.8 5.7 2 Q5.7 3.1 7.2 3.5 Q8.8 3.9 8.8 5.1 Q8.8 6.7 7.1 6.7 Q5.8 6.7 5.2 6" stroke="#cbcb41" stroke-width="1.1" fill="none"/></svg>
  <span style="position:absolute;left:27px;top:-3px;font-size:11.8px;-webkit-text-stroke:0.3px #9a9a9a">sfc.js</span>
  <svg style="position:absolute;left:83px;top:4px" width="8" height="8" viewBox="0 0 8 8"><path d="M1 1L7 7M7 1L1 7" stroke="#9a9a9a" stroke-width="1.4"/></svg>
 </div>
</div>
<div class="cl Rcl" style="top:933.00px"></div>
<div class="ig" style="left:60px;top:128.00px;height:910.00px"></div>
<div class="ig" style="left:74px;top:145.50px;height:105.00px"></div>
<div class="ig" style="left:74px;top:320.50px;height:17.50px"></div>
<div class="ig" style="left:74px;top:373.00px;height:35.00px"></div>
<div class="ig" style="left:74px;top:443.00px;height:577.50px"></div>
<div class="ig" style="left:88px;top:180.50px;height:52.50px"></div>
<div class="ig" style="left:88px;top:460.50px;height:542.50px"></div>
<div class="ig" style="left:102px;top:478.00px;height:507.50px"></div>
<div class="ig" style="left:116px;top:513.00px;height:17.50px"></div>
<div class="ig" style="left:116px;top:548.00px;height:17.50px"></div>
<div class="ig" style="left:116px;top:618.00px;height:35.00px"></div>
<div class="ig" style="left:116px;top:670.50px;height:17.50px"></div>
<div class="ig" style="left:116px;top:758.00px;height:140.00px"></div>
<div class="ig" style="left:130px;top:775.50px;height:105.00px"></div>
<div class="ig" style="left:144px;top:793.00px;height:70.00px"></div>
<div class="ig" style="left:158px;top:810.50px;height:35.00px"></div>
<div class="ln" style="top:23.00px;right:600.40px">1</div>
<div class="cd" style="left:60.40px;top:23.00px;letter-spacing:-0.200px"><i class="p">import</i> <i class="a">React</i>, <i class="g">{</i> <i class="a">Component</i> <i class="g">}</i> <i class="p">from</i> <i class="s">'react'</i>;</div>
<div class="ln" style="top:40.50px;right:600.40px">2</div>
<div class="cd" style="left:60.40px;top:40.50px;letter-spacing:-0.200px"><i class="p">import</i> <i class="a">PropTypes</i> <i class="p">from</i> <i class="s">'prop–types'</i>;</div>
<div class="ln" style="top:58.00px;right:600.40px">3</div>
<div class="ln" style="top:75.50px;right:600.40px">4</div>
<div class="cd" style="left:60.40px;top:75.50px;letter-spacing:-0.200px"><i class="p">import</i> <i class="a">ToDo</i> <i class="p">from</i> <i class="s">'./todo'</i>;</div>
<div class="ln" style="top:93.00px;right:600.40px">5</div>
<div class="cd" style="left:60.40px;top:93.00px;letter-spacing:-0.200px"><i class="p">import</i> <i class="s">'./your.less'</i>;</div>
<div class="ln" style="top:110.50px;right:600.40px">6</div>
<div class="cd" style="left:60.40px;top:110.50px;letter-spacing:-0.200px"><i class="p">export</i> <i class="p">default</i> <i class="k">class</i> <i class="c">TestSfc</i> <i class="k">extends</i> <i class="c">Component</i> <i class="g">{</i></div>
<div class="ln" style="top:128.00px;right:600.40px">7</div>
<div class="cd" style="left:74.40px;top:128.00px;letter-spacing:-0.200px"><i class="f">constructor</i><i class="o">(</i><i class="a">props</i><i class="o">)</i> <i class="o">{</i></div>
<div class="ln" style="top:145.50px;right:600.40px">8</div>
<div class="cd" style="left:88.40px;top:145.50px;letter-spacing:-0.200px"><i class="f">super</i><i class="u">(</i><i class="a">props</i><i class="u">)</i>;</div>
<div class="ln" style="top:163.00px;right:600.40px">9</div>
<div class="cd" style="left:88.40px;top:163.00px;letter-spacing:-0.200px"><i class="k">this</i>.<i class="a">state</i> = <i class="u">{</i></div>
<div class="ln" style="top:180.50px;right:600.40px">10</div>
<div class="cd" style="left:102.40px;top:180.50px;letter-spacing:-0.200px"><i class="s">list</i>: <i class="g">[</i><i class="n">1</i>, <i class="n">2</i>, <i class="n">3</i><i class="g">]</i>,</div>
<div class="ln" style="top:198.00px;right:600.40px">11</div>
<div class="cd" style="left:102.40px;top:198.00px;letter-spacing:-0.200px"><i class="s">html</i>: <i class="s">'&lt;div&gt;1111&lt;span&gt;222&lt;/span&gt;333&lt;p&gt;ssssss&lt;/p&gt;&lt;/div&gt;'</i>,</div>
<div class="ln" style="top:215.50px;right:600.40px">12</div>
<div class="cd" style="left:102.40px;top:215.50px;letter-spacing:-0.200px"><i class="s">error</i>: <i class="k">false</i></div>
<div class="ln" style="top:233.00px;right:600.40px">13</div>
<div class="cd" style="left:88.40px;top:233.00px;letter-spacing:-0.200px"><i class="u">}</i>;</div>
<div class="ln" style="top:250.50px;right:600.40px">14</div>
<div class="cd" style="left:74.40px;top:250.50px;letter-spacing:-0.200px"><i class="o">}</i></div>
<div class="ln" style="top:268.00px;right:600.40px">15</div>
<div class="cd" style="left:74.40px;top:268.00px;letter-spacing:-0.200px"><i class="k">static</i> <i class="a">propTypes</i> = <i class="o">{</i> <i class="s">msg</i>: <i class="a">PropTypes</i>.<i class="a">string</i>, <i class="s">imageSrc</i>: <i class="a">PropTypes</i>.<i class="a">string</i> <i class="o">}</i>;</div>
<div class="ln" style="top:285.50px;right:600.40px">16</div>
<div class="cd" style="left:74.40px;top:285.50px;letter-spacing:-0.200px"><i class="k">static</i> <i class="a">defaultProps</i> = <i class="o">{</i> <i class="s">msg</i>: <i class="s">'hello, sfc'</i> <i class="o">}</i>;</div>
<div class="ln" style="top:303.00px;right:600.40px">17</div>
<div class="cd" style="left:74.40px;top:303.00px;letter-spacing:-0.200px"><i class="f">clickMethod</i><i class="o">()</i> <i class="o">{</i></div>
<div class="ln" style="top:320.50px;right:600.40px">18</div>
<div class="cd" style="left:88.40px;top:320.50px;letter-spacing:-0.200px"><i class="c">console</i>.<i class="f">log</i><i class="u">(</i><i class="s">'click method'</i><i class="u">)</i>;</div>
<div class="ln" style="top:338.00px;right:600.40px">19</div>
<div class="cd" style="left:74.40px;top:338.00px;letter-spacing:-0.200px"><i class="o">}</i></div>
<div class="ln" style="top:355.50px;right:600.40px">20</div>
<div class="cd" style="left:74.40px;top:355.50px;letter-spacing:-0.200px"><i class="f">componentDidCatch</i><i class="o">(</i><i class="a">error</i>, <i class="a">info</i><i class="o">)</i> <i class="o">{</i></div>
<div class="ln" style="top:373.00px;right:600.40px">21</div>
<div class="cd" style="left:88.40px;top:373.00px;letter-spacing:-0.200px"><i class="k">this</i>.<i class="f">setState</i><i class="u">(</i><i class="g">{</i> <i class="s">error</i>: <i class="k">true</i> <i class="g">}</i><i class="u">)</i>;</div>
<div class="ln" style="top:390.50px;right:600.40px">22</div>
<div class="cd" style="left:88.40px;top:390.50px;letter-spacing:-0.200px"><i class="c">console</i>.<i class="f">log</i><i class="u">(</i><i class="s">'errorCaptured'</i><i class="u">)</i>;</div>
<div class="ln" style="top:408.00px;right:600.40px">23</div>
<div class="cd" style="left:74.40px;top:408.00px;letter-spacing:-0.200px"><i class="o">}</i></div>
<div class="ln" style="top:425.50px;right:600.40px">24</div>
<div class="cd" style="left:74.40px;top:425.50px;letter-spacing:-0.200px"><i class="f">render</i><i class="o">()</i> <i class="o">{</i></div>
<div class="ln" style="top:443.00px;right:600.40px">25</div>
<div class="cd" style="left:88.40px;top:443.00px;letter-spacing:-0.200px"><i class="p">return</i> <i class="u">(</i></div>
<div class="ln" style="top:460.50px;right:600.40px">26</div>
<div class="cd" style="left:102.40px;top:460.50px;letter-spacing:-0.200px"><i class="t">&lt;</i><i class="k">div</i> <i class="a">className</i>=<i class="s">"wrap"</i><i class="t">&gt;</i></div>
<div class="ln" style="top:478.00px;right:600.40px">27</div>
<div class="cd" style="left:116.40px;top:478.00px;letter-spacing:-0.200px"><i class="t">&lt;</i><i class="k">div</i><i class="t">&gt;</i>time: <i class="g">{</i><i class="c">Date</i>.<i class="f">now</i><i class="o">()</i><i class="g">}</i><i class="t">&lt;/</i><i class="k">div</i><i class="t">&gt;</i></div>
<div class="ln" style="top:495.50px;right:600.40px">28</div>
<div class="cd" style="left:116.40px;top:495.50px;letter-spacing:-0.200px"><i class="g">{</i><i class="k">this</i>.<i class="a">state</i>.<i class="a">error</i> ? <i class="o">(</i></div>
<div class="ln" style="top:513.00px;right:600.40px">29</div>
<div class="cd" style="left:130.40px;top:513.00px;letter-spacing:-0.200px"><i class="t">&lt;</i><i class="k">p</i><i class="t">&gt;</i>some error happend<i class="t">&lt;/</i><i class="k">p</i><i class="t">&gt;</i></div>
<div class="ln" style="top:530.50px;right:600.40px">30</div>
<div class="cd" style="left:116.40px;top:530.50px;letter-spacing:-0.200px"><i class="o">)</i> : <i class="o">(</i></div>
<div class="ln" style="top:548.00px;right:600.40px">31</div>
<div class="cd" style="left:130.40px;top:548.00px;letter-spacing:-0.200px"><i class="t">&lt;</i><i class="k">p</i> <i class="a">className</i>=<i class="s">"name"</i><i class="t">&gt;</i>your msg: <i class="u">{</i><i class="k">this</i>.<i class="a">props</i>.<i class="a">msg</i><i class="u">}</i><i class="t">&lt;/</i><i class="k">p</i><i class="t">&gt;</i></div>
<div class="ln" style="top:565.50px;right:600.40px">32</div>
<div class="cd" style="left:116.40px;top:565.50px;letter-spacing:-0.200px"><i class="o">)</i><i class="g">}</i></div>
<div class="ln" style="top:583.00px;right:600.40px">33</div>
<div class="ln" style="top:600.50px;right:600.40px">34</div>
<div class="cd" style="left:116.40px;top:600.50px;letter-spacing:-0.200px"><i class="t">&lt;</i><i class="k">p</i></div>
<div class="ln" style="top:618.00px;right:600.40px">35</div>
<div class="cd" style="left:130.40px;top:618.00px;letter-spacing:-0.200px"><i class="a">style</i>=<i class="g">{</i><i class="o">{</i> <i class="s">display</i>: <i class="k">this</i>.<i class="a">props</i>.<i class="a">msg</i> ? <i class="s">'block'</i> : <i class="s">'none'</i> <i class="o">}</i><i class="g">}</i></div>
<div class="ln" style="top:635.50px;right:600.40px">36</div>
<div class="cd" style="left:130.40px;top:635.50px;letter-spacing:-0.200px"><i class="a">className</i>=<i class="s">"shown"</i></div>
<div class="ln" style="top:653.00px;right:600.40px">37</div>
<div class="cd" style="left:116.40px;top:653.00px;letter-spacing:-0.200px"><i class="t">&gt;</i></div>
<div class="ln" style="top:670.50px;right:600.40px">38</div>
<div class="cd" style="left:130.40px;top:670.50px;letter-spacing:-0.200px">test v–show</div>
<div class="ln" style="top:688.00px;right:600.40px">39</div>
<div class="cd" style="left:116.40px;top:688.00px;letter-spacing:-0.200px"><i class="t">&lt;/</i><i class="k">p</i><i class="t">&gt;</i></div>
<div class="ln" style="top:705.50px;right:600.40px">40</div>
<div class="cd" style="left:116.40px;top:705.50px;letter-spacing:-0.200px"><i class="t">&lt;</i><i class="k">p</i> <i class="a">onClick</i>=<i class="g">{</i><i class="k">this</i>.<i class="a">clickMethod</i><i class="g">}</i><i class="t">&gt;</i>test v–on<i class="t">&lt;/</i><i class="k">p</i><i class="t">&gt;</i></div>
<div class="ln" style="top:723.00px;right:600.40px">41</div>
<div class="cd" style="left:116.40px;top:723.00px;letter-spacing:-0.200px"><i class="t">&lt;</i><i class="k">img</i> <i class="a">src</i>=<i class="g">{</i><i class="k">this</i>.<i class="a">props</i>.<i class="a">imageSrc</i><i class="g">}</i> <i class="t">/&gt;</i></div>
<div class="ln" style="top:740.50px;right:600.40px">42</div>
<div class="cd" style="left:116.40px;top:740.50px;letter-spacing:-0.200px"><i class="t">&lt;</i><i class="k">ul</i> <i class="a">className</i>=<i class="s">"test–list"</i><i class="t">&gt;</i></div>
<div class="ln" style="top:758.00px;right:600.40px">43</div>
<div class="cd" style="left:130.40px;top:758.00px;letter-spacing:-0.200px"><i class="g">{</i><i class="k">this</i>.<i class="a">props</i>.<i class="a">list</i>.<i class="f">map</i><i class="o">(</i><i class="u">(</i><i class="a">value</i>, <i class="a">index</i><i class="u">)</i> <i class="k">=&gt;</i> <i class="u">{</i></div>
<div class="ln" style="top:775.50px;right:600.40px">44</div>
<div class="cd" style="left:144.40px;top:775.50px;letter-spacing:-0.200px"><i class="p">return</i> <i class="g">(</i></div>
<div class="ln" style="top:793.00px;right:600.40px">45</div>
<div class="cd" style="left:158.40px;top:793.00px;letter-spacing:-0.200px"><i class="t">&lt;</i><i class="k">li</i> <i class="a">key</i>=<i class="o">{</i><i class="a">index</i><i class="o">}</i><i class="t">&gt;</i></div>
<div class="ln" style="top:810.50px;right:600.40px">46</div>
<div class="cd" style="left:172.40px;top:810.50px;letter-spacing:-0.200px"><i class="t">&lt;</i><i class="k">div</i><i class="t">&gt;</i><i class="o">{</i><i class="a">value</i><i class="o">}</i><i class="t">&lt;/</i><i class="k">div</i><i class="t">&gt;</i></div>
<div class="ln" style="top:828.00px;right:600.40px">47</div>
<div class="cd" style="left:172.40px;top:828.00px;letter-spacing:-0.200px"><i class="t">&lt;</i><i class="k">span</i><i class="t">&gt;</i><i class="o">{</i><i class="k">this</i>.<i class="a">props</i>.<i class="a">msg</i><i class="o">}</i><i class="t">&lt;/</i><i class="k">span</i><i class="t">&gt;</i></div>
<div class="ln" style="top:845.50px;right:600.40px">48</div>
<div class="cd" style="left:158.40px;top:845.50px;letter-spacing:-0.200px"><i class="t">&lt;/</i><i class="k">li</i><i class="t">&gt;</i></div>
<div class="ln" style="top:863.00px;right:600.40px">49</div>
<div class="cd" style="left:144.40px;top:863.00px;letter-spacing:-0.200px"><i class="g">)</i>;</div>
<div class="ln" style="top:880.50px;right:600.40px">50</div>
<div class="cd" style="left:130.40px;top:880.50px;letter-spacing:-0.200px"><i class="u">}</i><i class="o">)</i><i class="g">}</i></div>
<div class="ln" style="top:898.00px;right:600.40px">51</div>
<div class="cd" style="left:116.40px;top:898.00px;letter-spacing:-0.200px"><i class="t">&lt;/</i><i class="k">ul</i><i class="t">&gt;</i></div>
<div class="ln" style="top:915.50px;right:600.40px">52</div>
<div class="cd" style="left:116.40px;top:915.50px;letter-spacing:-0.200px"><i class="t">&lt;</i><i class="k">span</i><i class="t">&gt;</i><i class="g">{</i><i class="k">this</i>.<i class="a">state</i>.<i class="a">html</i>.<i class="f">replace</i><i class="o">(</i><i class="r">/&lt;</i><i class="s">[^&gt;]</i><i class="y">+</i><i class="r">&gt;/g</i>, <i class="s">''</i><i class="o">)</i><i class="g">}</i><i class="t">&lt;/</i><i class="k">span</i><i class="t">&gt;</i></div>
<div class="ln" style="top:933.00px;right:600.40px">53</div>
<div class="whx" style="left:340.40px;top:933.00px;width:42.00px"></div>
<div class="cd" style="left:116.40px;top:933.00px;letter-spacing:-0.200px"><i class="t">&lt;</i><i class="k">div</i> <i class="a">dangerouslySetInnerHTML</i>=<i class="g">{</i><i class="o">{</i> <i class="wh">__html</i>: <i class="k">this</i>.<i class="a">state</i>.<i class="a">html</i> <i class="o">}</i><i class="g">}</i> <i class="t">/&gt;</i></div>
<div class="ln" style="top:950.50px;right:600.40px">54</div>
<div class="cd" style="left:116.40px;top:950.50px;letter-spacing:-0.200px"><i class="t">&lt;</i><i class="k">ToDo</i> <i class="a">msg</i>=<i class="g">{</i><i class="k">this</i>.<i class="a">props</i>.<i class="a">msg</i><i class="g">}</i> <i class="a">list</i>=<i class="g">{</i><i class="k">this</i>.<i class="a">state</i>.<i class="a">list</i><i class="g">}</i> <i class="t">/&gt;</i></div>
<div class="ln" style="top:968.00px;right:600.40px">55</div>
<div class="cd" style="left:116.40px;top:968.00px;letter-spacing:-0.200px"><i class="g">{</i><i class="k">this</i>.<i class="a">props</i>.<i class="a">msg</i><i class="g">}</i></div>
<div class="ln" style="top:985.50px;right:600.40px">56</div>
<div class="cd" style="left:102.40px;top:985.50px;letter-spacing:-0.200px"><i class="t">&lt;/</i><i class="k">div</i><i class="t">&gt;</i></div>
<div class="ln" style="top:1003.00px;right:600.40px">57</div>
<div class="cd" style="left:88.40px;top:1003.00px;letter-spacing:-0.200px"><i class="u">)</i>;</div>
<div class="ln" style="top:1020.50px;right:600.40px">58</div>
<div class="cd" style="left:74.40px;top:1020.50px;letter-spacing:-0.200px"><i class="o">}</i></div>
<div class="ln" style="top:1038.00px;right:600.40px">59</div>
<div class="cd" style="left:60.40px;top:1038.00px;letter-spacing:-0.200px"><i class="g">}</i></div>
</div>
<div class="status"></div>
</body></html>
